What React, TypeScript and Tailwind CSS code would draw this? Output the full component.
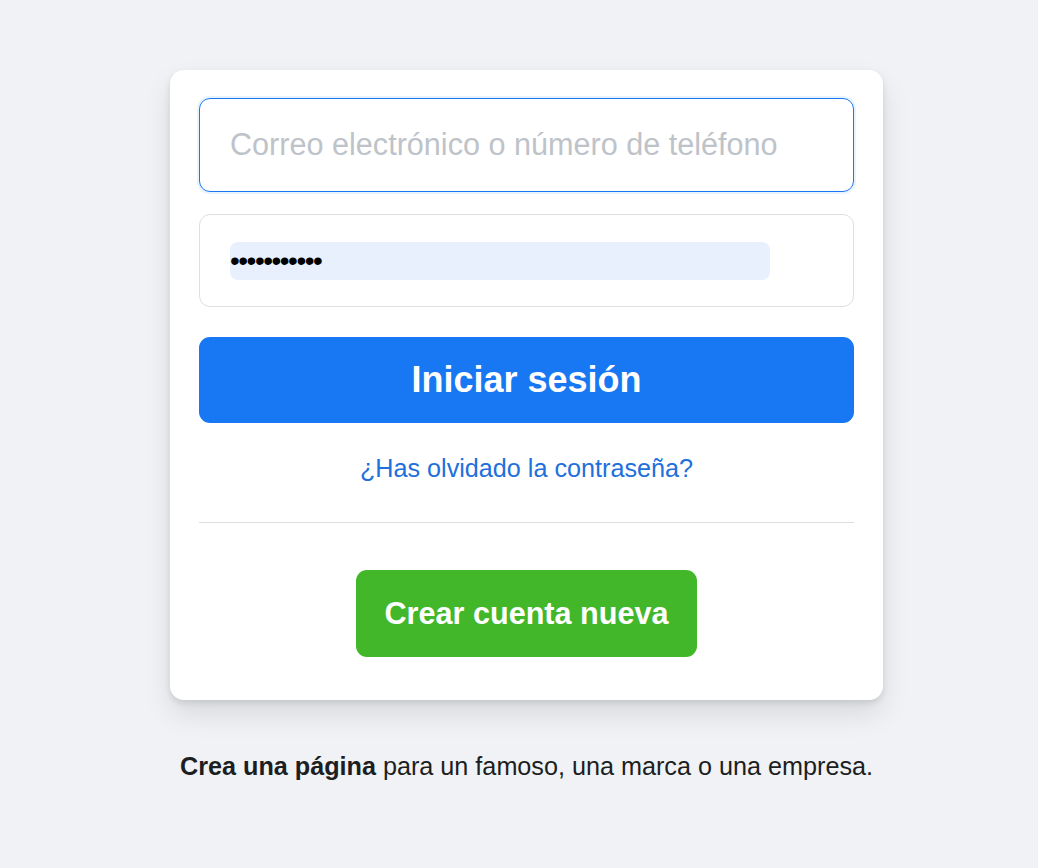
export default function App() {
  return (
    <div className="min-h-[868px] w-full bg-[#f0f2f5] pt-[70px] font-['Liberation_Sans',Arial,sans-serif]">
      <div className="ml-[170px] w-[713px]">
        {/* Card */}
        <div className="rounded-[14px] bg-white px-[29px] pb-[43px] pt-[28px] shadow-[0_3px_6px_rgba(0,0,0,0.1),0_14px_28px_rgba(0,0,0,0.1)]">
          <div className="flex h-[94px] items-center rounded-[11px] border border-[#1877f2] px-[30px] shadow-[0_0_0_2px_#e7f3ff]">
            <input
              type="text"
              placeholder="Correo electrónico o número de teléfono"
              className="w-full bg-transparent text-[30.6px] text-[#1c1e21] outline-none placeholder:text-[#bec3c9]"
            />
          </div>
          <div className="mt-[22px] flex h-[93px] items-center rounded-[11px] border border-[#dddfe2] pl-[30px] pr-[83px]">
            <div className="flex h-[38px] w-full items-center rounded-[8px] bg-[#e8f0fe] text-[28px] leading-none tracking-[-1.5px] text-black">
              •••••••••••
            </div>
          </div>
          <button className="mt-[30px] flex h-[86px] w-full items-center justify-center rounded-[11px] bg-[#1877f2] text-[36px] font-bold text-white">
            Iniciar sesión
          </button>
          <div className="mt-[30px] text-center leading-[30px]">
            <a href="#" className="text-[25.2px] text-[#216fdb]">
              ¿Has olvidado la contraseña?
            </a>
          </div>
          <div className="mt-[35px] border-t border-[#dadde1]" />
          <div className="mt-[47px] flex justify-center">
            <button className="flex h-[87px] w-[341px] items-center justify-center rounded-[11px] bg-[#42b72a] text-[30.6px] font-bold text-white">
              Crear cuenta nueva
            </button>
          </div>
        </div>
        {/* Footer */}
        <p className="mt-[51px] text-center text-[25.2px] leading-[30px] text-[#1c1e21]">
          <span className="font-bold">Crea una página</span> para un famoso, una marca o una empresa.
        </p>
      </div>
    </div>
  )
}
